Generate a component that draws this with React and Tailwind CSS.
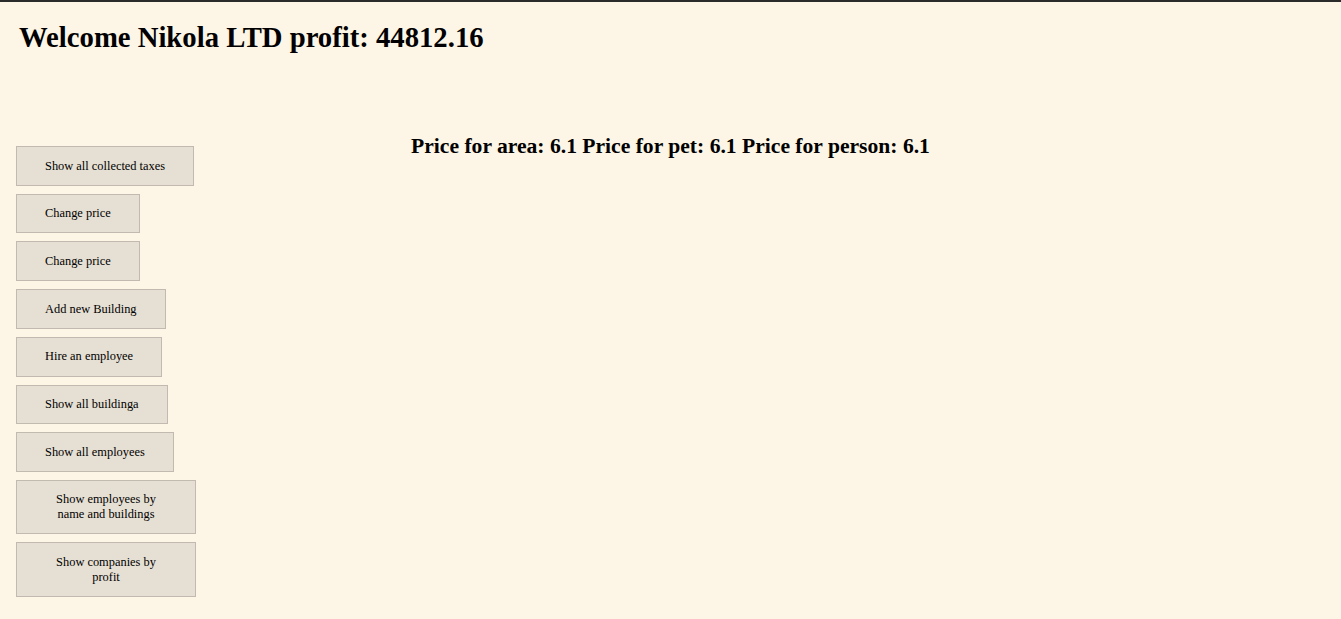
const buttons = [
    "Show all collected taxes",
    "Change price",
    "Change price",
    "Add new Building",
    "Hire an employee",
    "Show all buildinga",
    "Show all employees",
    "Show employees by name and buildings",
    "Show companies by profit",
]

const App = () => {
    return (
        <div className="min-h-[619px] bg-[#fdf5e6] border-t-2 border-[#2b2b2b] text-black" style={{ fontFamily: '"Liberation Serif", "Times New Roman", serif' }}>
            <h1 className="px-[19px] pt-[19px] text-[28.7px] leading-[32px] font-bold">Welcome Nikola LTD profit: 44812.16</h1>
            <div className="grid mt-[81px]">
                <h2 className="col-start-1 row-start-1 text-center text-[21.6px] leading-[24px] font-bold">
                    Price for area: 6.1 Price for pet: 6.1 Price for person: 6.1
                </h2>
                <div className="col-start-1 row-start-1 flex flex-col items-start gap-[8px] pl-[16px] pt-[12px]">
                    {buttons.map((label, i) => (
                        <button key={i} className="max-w-[180px] px-[28px] py-[11.5px] text-[12.4px] leading-[14.7px] text-center bg-[#e6dfd3] border border-[#c2bab0]">
                            {label}
                        </button>
                    ))}
                </div>
            </div>
        </div>
    )
}

export default App
